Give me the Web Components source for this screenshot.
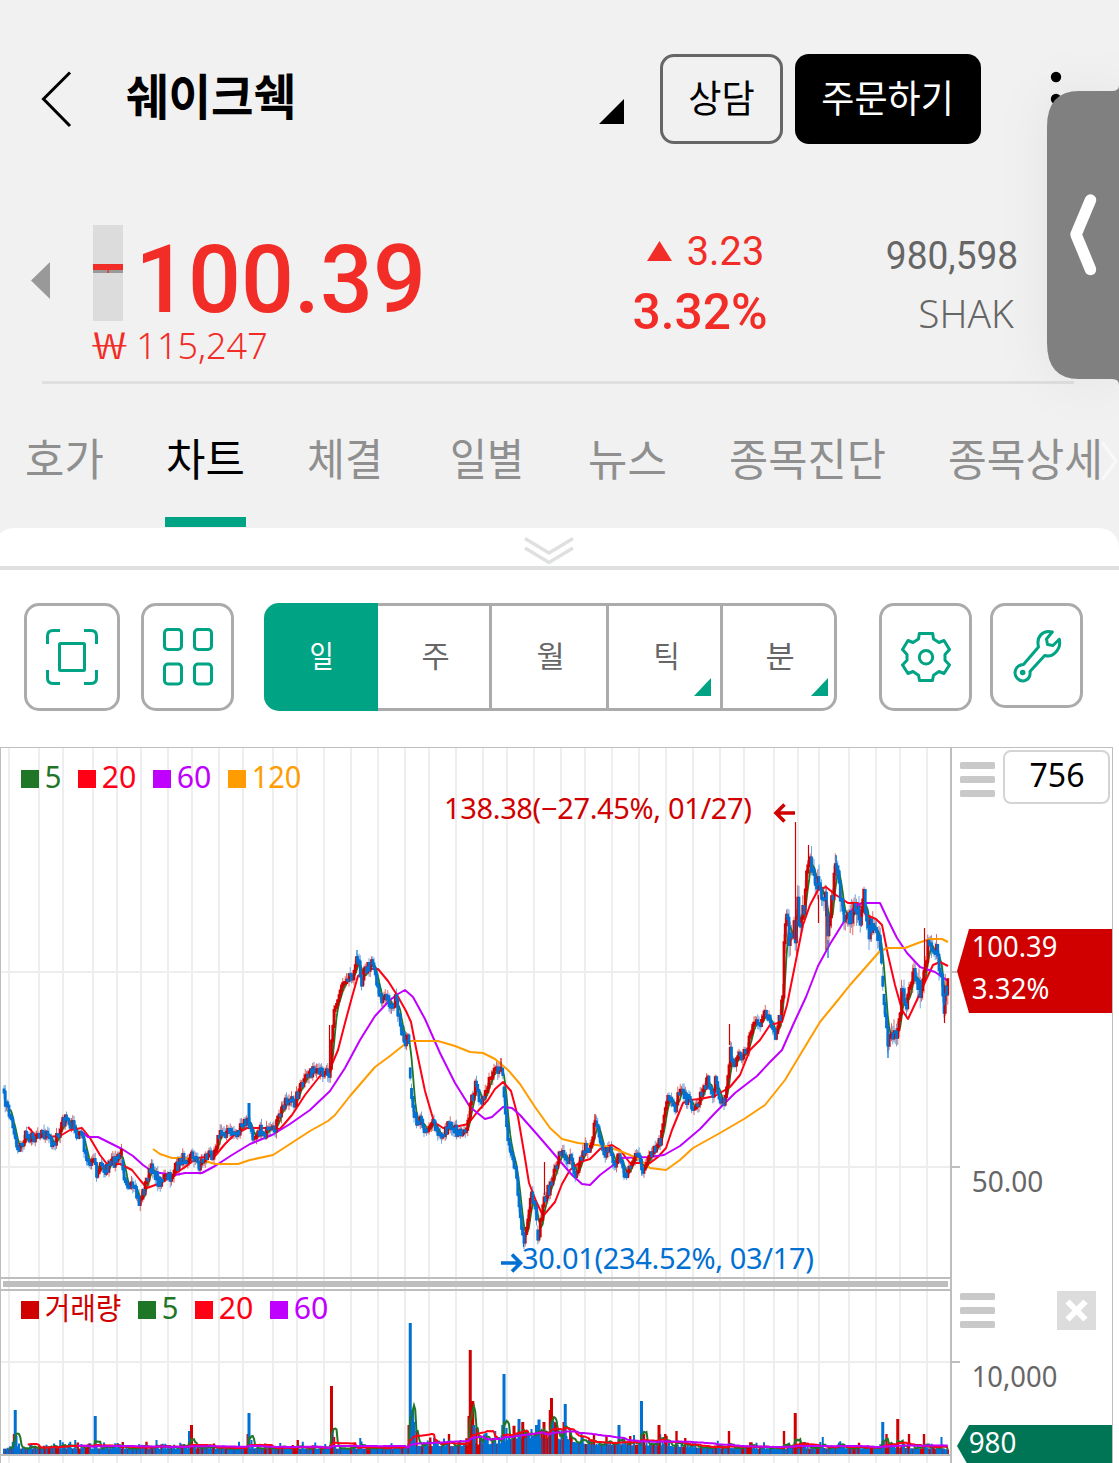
<!DOCTYPE html>
<html lang="ko">
<head>
<meta charset="utf-8">
<title>쉐이크쉑</title>
<style>
  body {
    margin: 0;
    width: 1119px;
    height: 1463px;
    overflow: hidden;
    position: relative;
    background: #fff;
    font-family: "Noto Sans", "Noto Sans CJK KR", sans-serif;
  }
</style>
</head>
<body>
<stock-header></stock-header>
<collapse-bar></collapse-bar>
<chart-toolbar></chart-toolbar>
<stock-chart></stock-chart>
<side-handle></side-handle>

<script>
const FONTS = {
  noto: '"Noto Sans", "Noto Sans CJK KR", sans-serif',
  roboto: 'Roboto, "Noto Sans", sans-serif',
  kr: '"Noto Sans CJK KR", "Noto Sans", sans-serif'
};
const BEARING = {noto: 0.045, roboto: 0.03, kr: 0.02};
const BASELINE = {noto: 0.86, roboto: 0.86, kr: 0.865};

// one line of text, stretched or squeezed to the width w, centred on its own box
class FitText extends HTMLElement {
  connectedCallback() {
    const w = +this.getAttribute('w');
    const size = +this.getAttribute('size');
    const weight = this.getAttribute('weight') || 400;
    const name = this.getAttribute('font') || 'noto';
    const pad = size * BEARING[name];
    this.attachShadow({mode: 'open'}).innerHTML = `
    <style>
      :host { display: block; flex: none; width: ${w}px; height: ${size}px; }
      svg { display: block; overflow: visible; }
      text { font: ${weight} ${size}px ${FONTS[name]}; fill: currentColor; }
    </style>
    <svg width="${w}" height="${size}">
      <text x="${-pad}" y="${size * BASELINE[name]}" textLength="${w + pad * 2}" lengthAdjust="spacingAndGlyphs">${this.textContent}</text>
    </svg>`;
  }
}
customElements.define('fit-text', FitText);

class TabItem extends HTMLElement {
  connectedCallback() {
    this.attachShadow({mode: 'open'}).innerHTML = `
    <style>
      :host {
        display: flex;
        flex-direction: column;
        align-items: center;
        justify-content: space-between;
        flex: none;
        height: 89px;
        color: #8f8f8f;
      }
      :host([active]) { color: #000; }
      i { width: 81px; height: 10px; margin: 0 -2px; }
      :host([active]) i { background: #00a383; }
    </style>
    <slot></slot>${this.hasAttribute('active') ? '<i></i>' : ''}`;
  }
}
customElements.define('tab-item', TabItem);

class StockHeader extends HTMLElement {
  constructor() {
    super();
    this.attachShadow({mode: 'open'}).innerHTML = `
    <style>
      :host { display: block; height: 528px; background: #f1f1f1; overflow: hidden; }
      svg { display: block; flex: none; }
      .bar { display: flex; align-items: center; height: 90px; padding: 54px 0 0 41px; }
      .title { margin: -3px 0 0 55px; }
      .more-name { margin: 25px 36px 0 304px; }
      .btn {
        box-sizing: border-box;
        display: flex;
        justify-content: center;
        align-items: center;
        height: 90px;
        padding-bottom: 2px;
        border-radius: 14px;
      }
      .ask { width: 123px; border: 3px solid #666; margin-right: 12px; }
      .order { width: 186px; background: #000; color: #fff; margin-right: 69px; }
      .order fit-text { margin-right: 2px; }
      .quote { display: flex; align-items: flex-start; height: 237px; padding-left: 31px; color: #f22d27; }
      .prev { margin: 118px 43px 0 0; }
      .price { width: 541px; padding-top: 81px; }
      .now { display: flex; gap: 15px; height: 96px; }
      .now fit-text { margin-top: 5px; }
      .won { display: flex; gap: 13px; margin: 6px 0 0 1px; }
      .diff { width: 132px; padding-top: 87px; }
      .diff div { display: flex; align-items: center; justify-content: flex-end; gap: 16px; margin-right: 3px; }
      .diff > fit-text { margin-top: 15px; }
      .code { width: 131px; margin-left: 121px; padding-top: 92px; color: #666; }
      .code fit-text + fit-text { margin: 20px 0 0 33px; }
      hr { width: 1032px; height: 3px; margin: 0 0 0 42px; border: 0; background: #dfdfdf; }
      nav { display: flex; margin-top: 54px; padding-left: 26px; }
    </style>
    <div class="bar">
      <svg width="31" height="58"><path d="M29 2.500 2.500 29 29 56" fill="none" stroke="#000" stroke-width="3"/></svg>
      <fit-text class="title" w="168" size="49" weight="700" font="kr">쉐이크쉑</fit-text>
      <svg class="more-name" width="25" height="25"><path d="M25 0V25H0z"/></svg>
      <div class="btn ask"><fit-text w="65" size="38" font="kr">상담</fit-text></div>
      <div class="btn order"><fit-text w="131" size="38" font="kr">주문하기</fit-text></div>
      <svg width="12" height="70"><g><circle cx="6" cy="13" r="5.200"/><circle cx="6" cy="35" r="5.200"/><circle cx="6" cy="57" r="5.200"/></g></svg>
    </div>
    <div class="quote">
      <svg class="prev" width="19" height="37"><path d="M19 0V37L0 18.500z" fill="#999"/></svg>
      <div class="price">
        <div class="now">
          <svg width="30" height="96"><path fill="#dcdcdc" d="M0 0h30v96H0z"/><path fill="#999" d="M0 45h30v3H0z"/><path fill="#f22d27" d="M0 39h30v6H0zM14.500 45h1.500v3h-1.500z"/></svg>
          <fit-text w="285" size="95" weight="500" font="roboto">100.39</fit-text>
        </div>
        <div class="won">
          <fit-text w="31" size="37" weight="300" font="kr">₩</fit-text>
          <fit-text w="128" size="37" weight="350">115,247</fit-text>
        </div>
      </div>
      <div class="diff">
        <div><svg width="25" height="20"><path d="M12.500 0 25 20H0z" fill="#f22d27"/></svg><fit-text w="75" size="40" font="roboto">3.23</fit-text></div>
        <fit-text w="132" size="50" weight="500" font="roboto">3.32%</fit-text>
      </div>
      <div class="code">
        <fit-text w="130" size="38" font="roboto">980,598</fit-text>
        <fit-text w="92" size="39" weight="350">SHAK</fit-text>
      </div>
    </div>
    <hr>
    <nav>
      <tab-item><fit-text w="77" size="44" font="kr">호가</fit-text></tab-item>
      <tab-item active style="margin-left:64px"><fit-text w="77" size="44" font="kr">차트</fit-text></tab-item>
      <tab-item style="margin-left:64px"><fit-text w="74" size="44" font="kr">체결</fit-text></tab-item>
      <tab-item style="margin-left:69px"><fit-text w="72" size="44" font="kr">일별</fit-text></tab-item>
      <tab-item style="margin-left:66px"><fit-text w="77" size="44" font="kr">뉴스</fit-text></tab-item>
      <tab-item style="margin-left:64px"><fit-text w="155" size="44" font="kr">종목진단</fit-text></tab-item>
      <tab-item style="margin-left:64px"><fit-text w="153" size="44" font="kr">종목상세</fit-text></tab-item>
      <svg width="17" height="44"><path d="M0 4 14 23 0 42" fill="none" stroke="#fff" stroke-opacity=".6" stroke-width="3"/></svg>
    </nav>`;
  }
}
customElements.define('stock-header', StockHeader);

class CollapseBar extends HTMLElement {
  constructor() {
    super();
    this.attachShadow({mode: 'open'}).innerHTML = `
    <style>
      :host { display: block; height: 42px; background: #f1f1f1; }
      div {
        box-sizing: border-box;
        height: 42px;
        margin-left: -6px;
        padding: 8px 0 0 530px;
        background: #fff;
        border-bottom: 4px solid #dfe1e0;
        border-radius: 20px 20px 0 0;
      }
      svg { display: block; }
    </style>
    <div><svg width="50" height="30" fill="none" stroke="#dfe1e0" stroke-width="3.500"><path d="M1 2.500 25 17 49 2.500M1 12 25 26.500 49 12"/></svg></div>`;
  }
}
customElements.define('collapse-bar', CollapseBar);

class ToolButton extends HTMLElement {
  constructor() {
    super();
    this.attachShadow({mode: 'open'}).innerHTML = `
    <style>
      :host {
        box-sizing: border-box;
        display: flex;
        align-items: center;
        justify-content: center;
        flex: none;
        width: 93px;
        height: 108px;
        border: 3px solid #ababab;
        border-radius: 15px;
        background: #fff;
      }
    </style>
    <slot></slot>`;
  }
}
customElements.define('tool-button', ToolButton);

class PeriodItem extends HTMLElement {
  constructor() {
    super();
    this.attachShadow({mode: 'open'}).innerHTML = `
    <style>
      :host {
        box-sizing: border-box;
        display: flex;
        align-items: center;
        justify-content: center;
        position: relative;
        height: 108px;
        padding: 0 0 2px 3px;
        border: solid #ababab;
        border-width: 3px 3px 3px 0;
        color: #666;
      }
      :host([active]) { background: #00a383; border-color: #00a383; color: #fff; border-radius: 15px 0 0 15px; }
      :host(:last-of-type) { border-radius: 0 15px 15px 0; }
      svg { display: none; position: absolute; right: 9px; bottom: 12px; }
      :host(:last-of-type) svg { right: 6px; }
      :host([more]) svg { display: block; }
    </style>
    <slot></slot>
    <svg width="17" height="18"><path d="M17 0v18H0z" fill="#00a383"/></svg>`;
  }
}
customElements.define('period-item', PeriodItem);

class ChartToolbar extends HTMLElement {
  constructor() {
    super();
    this.attachShadow({mode: 'open'}).innerHTML = `
    <style>
      :host { display: flex; align-items: flex-start; height: 144px; padding: 33px 0 0 24px; }
      svg { display: block; fill: none; stroke: #00a383; stroke-width: 3; }
      .periods { display: flex; margin: 0 42px 0 30px; }
    </style>
    <tool-button style="width:96px;margin-right:21px">
      <svg width="52" height="56"><path d="M1.500 15V7q0-5.500 5.500-5.500h7M38 1.500h7q5.500 0 5.500 5.500v8M50.500 41v8q0 5.500-5.500 5.500h-7M14 54.500H7q-5.500 0-5.500-5.500v-8"/><rect x="13.500" y="14.500" width="25" height="27" rx="1"/></svg>
    </tool-button>
    <tool-button>
      <svg width="50" height="58"><rect x="1.500" y="1.500" width="17" height="20" rx="3.500"/><rect x="31.500" y="1.500" width="17" height="20" rx="3.500"/><rect x="1.500" y="36" width="17" height="20" rx="3.500"/><rect x="31.500" y="36" width="17" height="20" rx="3.500"/></svg>
    </tool-button>
    <div class="periods">
      <period-item active style="width:114px"><fit-text w="23" size="30" font="kr">일</fit-text></period-item>
      <period-item style="width:114px"><fit-text w="27" size="30" font="kr">주</fit-text></period-item>
      <period-item style="width:117px"><fit-text w="27" size="30" font="kr">월</fit-text></period-item>
      <period-item more style="width:114px"><fit-text w="25" size="30" font="kr">틱</fit-text></period-item>
      <period-item more style="width:114px"><fit-text w="28" size="30" font="kr">분</fit-text></period-item>
    </div>
    <tool-button>
      <svg width="50" height="50" stroke-linejoin="round"><path d="M18.300 1.500H31.700L32.500 7 38 10.500 43 8.500 48.500 17.500 44 22.500V28.300L48.500 33 43 41.500 38 39.500 32.500 43.200 31.500 48.500H18.500L17.500 43.200 12 39.500 7 41.500 1.500 33 6 28.300V22.500L1.500 17.500 7 8.500 12 10.500 17.500 7z"/><circle cx="25" cy="25.300" r="6.700"/></svg>
    </tool-button>
    <tool-button style="height:105px;margin-left:18px">
      <svg width="46" height="51" overflow="visible" stroke-linejoin="round"><path d="M38.300 2C29 -.5 22 6.500 24.500 17L9.500 34.500C1 35 -.8 43.500 3 48 8.500 54 17 50 16 41.500L30.700 25.500C39 28 47.500 19 45.300 9.300L39 15.500 33.500 14.500 32.500 9z"/><circle cx="8.700" cy="42.500" r="1.300"/></svg>
    </tool-button>`;
  }
}
customElements.define('chart-toolbar', ChartToolbar);

class ChartLegend extends HTMLElement {
  connectedCallback() {
    const items = this.getAttribute('items').split(' ').map(item => item.split(':'));
    this.attachShadow({mode: 'open'}).innerHTML = `
    <style>
      :host { display: flex; gap: 18px; position: absolute; left: 21px; }
      span { display: flex; align-items: center; gap: 7px; }
      i { width: 18px; height: 18px; margin-top: 4px; }
    </style>
    ${items.map(([name, color, w]) => `<span style="color:${color}"><i style="background:${color}"></i><fit-text w="${w}" size="30">${name}</fit-text></span>`).join('')}`;
  }
}
customElements.define('chart-legend', ChartLegend);

// [x, y] of the price
const PRICE = [[4,1097],[8,1110],[13,1125],[17,1147],[21,1147],[26,1135],[32,1138],[40,1132],[47,1136],[53,1143],[59,1136],[62,1122],[66,1120],[73,1125],[77,1140],[81,1130],[85,1152],[90,1165],[94,1155],[97,1178],[100,1165],[106,1170],[113,1162],[119,1158],[121,1150],[124,1175],[129,1185],[135,1192],[139,1202],[144,1190],[148,1175],[153,1168],[158,1182],[164,1178],[170,1178],[176,1168],[181,1160],[188,1157],[193,1155],[199,1165],[205,1157],[213,1153],[219,1136],[224,1132],[231,1133],[238,1133],[245,1122],[249,1122],[252,1137],[258,1130],[265,1133],[273,1132],[279,1118],[285,1100],[294,1103],[299,1090],[304,1083],[310,1070],[317,1075],[325,1070],[330,1072],[331,1045],[334,1012],[338,1000],[341,985],[347,976],[353,974],[355,972],[357,955],[359,960],[361,982],[364,972],[369,966],[372,958],[376,978],[381,1000],[387,998],[392,1007],[396,998],[399,1020],[401,1034],[405,1041],[409,1038],[411,1097],[413,1112],[416,1121],[421,1121],[426,1131],[431,1122],[435,1128],[440,1138],[445,1131],[450,1124],[456,1131],[462,1131],[468,1124],[471,1102],[475,1086],[479,1096],[484,1101],[489,1082],[494,1074],[498,1071],[501,1064],[503,1076],[505,1112],[508,1137],[512,1154],[515,1169],[518,1194],[521,1225],[524,1242],[527,1231],[531,1194],[535,1210],[538,1238],[541,1220],[544,1199],[549,1189],[553,1179],[557,1163],[561,1148],[566,1163],[570,1153],[575,1174],[580,1161],[585,1148],[590,1148],[595,1124],[600,1138],[605,1153],[610,1148],[615,1168],[619,1153],[624,1175],[629,1169],[634,1158],[640,1158],[643,1172],[650,1158],[655,1150],[660,1142],[664,1120],[667,1100],[671,1097],[675,1108],[681,1085],[686,1098],[692,1105],[697,1108],[702,1090],[707,1080],[713,1095],[716,1078],[720,1100],[724,1103],[728,1080],[730,1045],[733,1065],[738,1055],[742,1060],[748,1045],[753,1025],[760,1025],[765,1010],[771,1020],[776,1040],[780,1015],[783,1000],[784,940],[787,915],[789,940],[794,930],[796,940],[797,880],[800,935],[804,905],[807,870],[810,852],[813,880],[818,885],[822,895],[826,900],[828,930],[830,915],[833,890],[836,860],[840,890],[845,925],[850,915],[855,910],[860,920],[864,898],[868,935],[873,920],[877,930],[881,950],[883,1000],[886,1030],[888,1047],[892,1035],[896,1037],[900,1010],[902,990],[906,1010],[910,980],[915,970],[920,990],[925,965],[928,945],[932,945],[937,955],[940,970],[944,1005],[948,975]];

const MA = {
  '#ff0015': '28,1127 35,1135 45,1137 60,1136 70,1130 82,1128 90,1138 100,1155 107,1164 120,1164 132,1170 140,1180 147,1188 158,1184 172,1176 185,1167 197,1158 215,1156 225,1144 235,1134 247,1128 265,1128 280,1129 292,1115 305,1095 320,1076 330,1069 338,1050 345,1023 352,997 358,976 367,969 378,969 388,981 397,995 406,1011 411,1022 416,1048 425,1091 434,1122 443,1128 455,1127 468,1124 478,1111 488,1100 495,1089 503,1082 511,1091 518,1117 524,1152 529,1183 536,1201 543,1216 555,1202 562,1184 570,1170 580,1162 590,1159 600,1149 612,1145 620,1150 630,1163 642,1163 650,1163 658,1157 666,1148 672,1130 683,1103 690,1100 700,1099 715,1096 730,1087 740,1075 750,1050 760,1040 770,1025 782,1022 787,1005 795,965 803,925 810,905 818,890 826,887 836,895 848,903 858,903 866,915 876,919 882,925 888,955 895,985 902,1010 908,1019 916,1002 925,982 933,965 940,962 948,966',
  '#c000ff': '82,1132 88,1137 98,1137 110,1143 122,1149 133,1156 143,1165 153,1172 175,1175 185,1173 202,1173 215,1166 232,1155 250,1144 272,1135 290,1124 310,1110 330,1091 345,1068 360,1040 375,1016 390,1000 398,994 405,990 413,997 425,1019 440,1053 455,1083 470,1107 485,1119 492,1117 503,1107 512,1108 520,1115 535,1132 548,1147 560,1161 572,1175 582,1184 590,1185 600,1175 612,1166 620,1158 650,1157 664,1155 680,1146 700,1129 715,1113 735,1093 757,1076 770,1062 782,1050 793,1025 806,997 818,966 830,944 845,920 855,906 862,903 880,903 888,920 897,938 907,953 920,967 935,972 948,981',
  '#ff9c00': '153,1149 160,1154 172,1158 185,1158 205,1161 215,1164 238,1164 250,1160 273,1155 290,1144 310,1131 328,1121 335,1115 350,1096 375,1067 390,1056 405,1044 410,1041 438,1041 455,1046 470,1052 483,1053 495,1059 508,1070 520,1084 535,1107 550,1128 562,1139 578,1143 605,1146 620,1151 630,1155 640,1160 650,1168 666,1170 680,1160 693,1148 720,1133 744,1119 765,1105 785,1080 800,1055 820,1022 838,1000 850,985 865,968 880,951 888,948 905,948 918,943 930,939 942,939 948,942'
};

// single long wicks: x, top, bottom, colour
const WICKS = [[329.5,1025,1070,0],[249,1103,1128,1],[795.5,822,940,0],[729.5,1024,1045,0],[924.500,928,970,0],[808.500,845,870,0],[544.500,1162,1195,0],[523.500,1235,1247,1],[944.500,1005,1023,0],[888,1040,1058,1],[826,900,950,0],[818.500,895,923,0],[828,940,958,1],[595,1114,1125,0],[501,1058,1072,0],[836,855,880,1],[357,950,965,1]];

// volume peaks: x, top, colour
const PEAKS = [[14,1434,0],[15.500,1410,1],[17,1436,1],[60,1440,1],[75,1440,1],[95.500,1416,1],[157,1440,1],[189.500,1431,1],[191,1425,0],[249.500,1413,1],[248,1434,0],[251,1440,1],[298,1440,0],[331,1386,0],[332.500,1428,1],[334,1437,0],[360,1438,1],[409,1425,0],[410.500,1323,1],[412.500,1410,1],[414,1422,1],[416,1431,0],[449,1434,0],[469,1416,0],[470.500,1350,0],[472.500,1401,0],[474,1425,1],[476,1428,0],[503,1425,1],[504.500,1374,1],[506,1428,1],[519,1419,1],[523,1422,0],[544,1422,0],[550,1410,0],[552,1398,0],[554,1422,0],[564,1422,0],[565.500,1404,1],[619.500,1425,1],[641.500,1401,1],[644,1434,0],[659.500,1425,0],[665,1434,0],[677,1431,0],[729.500,1431,0],[784.500,1431,0],[795.500,1413,0],[822.500,1437,1],[883,1422,1],[886,1434,0],[898,1419,0],[909,1434,0],[924.500,1434,0],[942,1437,1]];
const LEVELS = [[0,8],[400,8],[420,12],[460,12],[500,16],[515,24],[555,24],[575,18],[590,14],[660,13],[700,9],[760,8],[900,9],[950,7]];

const GRID = [9,39,63,93,117,141,168,192,219,243,273,297,324,351,378,405,429,456,483,507,534,561,585,612,639,666,693,720,744,774,798,819,849,876,900,927];
const RED = '#d00000';
const BLUE = '#0070d2';

let seed = 7;
const rand = () => {
  seed = (seed * 16807) % 2147483647;
  return seed / 2147483647;
};

const at = (points, x) => {
  const i = Math.max(1, points.findIndex(p => p[0] >= x));
  const [x0, y0] = points[i - 1];
  const [x1, y1] = points[i];
  return y0 + (y1 - y0) * (x - x0) / (x1 - x0);
};

const average = (values, n) => values.map((v, i) => {
  const part = values.slice(Math.max(0, i - n + 1), i + 1);
  return part.reduce((a, b) => a + b, 0) / part.length;
});

class StockChart extends HTMLElement {
  constructor() {
    super();
    this.xs = Array.from({length: 756}, (_, i) => 4 + i * 1.25);
    this.attachShadow({mode: 'open'});
    this.render();
  }

  candles() {
    // the swings are wider in the volatile right part
    const closes = this.xs.map(x => at(PRICE, Math.min(x, 948)) + (rand() - 0.5) * (x > 780 ? 17 : 10));
    const path = ['', ''];
    const wick = ['', ''];
    closes.forEach((close, i) => {
      const open = i ? closes[i - 1] : close - 2;
      const x = this.xs[i];
      // only falls leave an open gap
      const gap = close - open > 18 && (x < 600 || x > 880 && x < 885);
      const from = gap ? close - 8 : open;
      const down = close > from ? 1 : 0;
      const top = Math.min(from, close) - 1.5;
      const bottom = Math.max(from, close) + 1.5;
      const reach = x > 780 ? 12 : 6;
      path[down] += `M${x} ${top.toFixed(1)}V${bottom.toFixed(1)}`;
      wick[down] += `M${x} ${(top - rand() * reach).toFixed(1)}V${(bottom + rand() * reach).toFixed(1)}`;
    });
    const ma5 = average(closes, 5).map((y, i) => `${this.xs[i]},${y.toFixed(1)}`).slice(5).join(' ');
    return `
      <path d="${wick[0]}" stroke="${RED}" stroke-opacity=".6"/>
      <path d="${wick[1]}" stroke="${BLUE}" stroke-opacity=".6"/>
      <polyline points="${ma5}" stroke="#1f7627" stroke-width="1.800"/>
      ${Object.entries(MA).map(([color, points]) => `<polyline points="${points}" stroke="${color}" stroke-width="2" stroke-linejoin="round"/>`).join('')}
      <path d="${path[0]}" stroke="${RED}" stroke-width="2.800"/>
      <path d="${path[1]}" stroke="${BLUE}" stroke-width="2.800"/>
      ${WICKS.map(([x, y0, y1, c]) => `<path d="M${x} ${y0}V${y1}" stroke="${c ? BLUE : RED}" stroke-width="${x === 249 ? 3 : 1.2}"/>`).join('')}`;
  }

  volumes() {
    const heights = this.xs.map(x => at(LEVELS, x) * (0.65 + rand() ** 4 * 0.9));
    const colors = this.xs.map(() => rand() > 0.35 ? 1 : 0);
    PEAKS.forEach(([x, top, color]) => {
      const i = Math.round((x - 4) / 1.25);
      heights[i] = 1454 - top;
      colors[i] = color;
    });
    const path = ['', ''];
    const tall = ['', ''];
    heights.forEach((h, i) => {
      (h > 26 ? tall : path)[colors[i]] += `M${this.xs[i]} 1454v${-h.toFixed(1)}`;
    });
    const line = (n, color) => {
      const points = average(heights, n).map((h, i) => `${this.xs[i]},${(1454 - h).toFixed(1)}`).slice(n - 1).join(' ');
      return `<polyline points="${points}" stroke="${color}" stroke-width="2"/>`;
    };
    return `
      <path d="${path[0]}" stroke="${RED}" stroke-width="2.400"/>
      <path d="${path[1]}" stroke="${BLUE}" stroke-width="2"/>
      <path d="${tall[0]}" stroke="${RED}" stroke-width="3"/>
      <path d="${tall[1]}" stroke="${BLUE}" stroke-width="3"/>
      ${line(5, '#1f7627')}${line(20, '#ff0015')}${line(60, '#c000ff')}`;
  }

  render() {
    const menu = '<svg width="35" height="35"><path d="M1.500 0h32q1.500 0 1.500 1.500v4q0 1.500-1.500 1.500h-32Q0 7 0 5.500v-4Q0 0 1.500 0zm0 14h32q1.500 0 1.500 1.500v4q0 1.500-1.500 1.500h-32Q0 21 0 19.500v-4Q0 14 1.500 14zm0 14h32q1.500 0 1.500 1.500v4q0 1.500-1.500 1.500h-32Q0 35 0 33.500v-4Q0 28 1.500 28z" fill="#c9c9c9"/></svg>';
    this.shadowRoot.innerHTML = `
    <style>
      :host { display: flex; position: relative; width: 1113px; height: 716px; }
      svg { display: block; flex: none; }
      text { font: 29px "Noto Sans", sans-serif; }
      .plot { fill: none; overflow: visible; }
      .axis {
        box-sizing: border-box;
        width: 161px;
        height: 717px;
        border: solid #bebebe;
        border-width: 1px 1px 0 0;
        display: flex;
        flex-direction: column;
      }
      .row { display: flex; align-items: center; padding-left: 8px; }
      .row .menu { margin-top: 5px; }
      .count {
        box-sizing: border-box;
        display: flex;
        justify-content: center;
        align-items: center;
        width: 107px;
        height: 54px;
        margin-left: 8px;
        padding-bottom: 3px;
        border: 2px solid #d4d4d4;
        border-radius: 8px;
      }
      .flag { box-sizing: border-box; width: 155px; margin-left: 5px; color: #fff; flex: none; }
      .last {
        height: 84px;
        margin-top: 125px;
        padding: 3px 0 0 16px;
        background: ${RED};
        clip-path: polygon(12px 0, 100% 0, 100% 100%, 12px 100%, 0 50%);
      }
      .last fit-text + fit-text { margin: 13px 0 0 0; }
      .vol {
        height: 42px;
        margin-top: 34px;
        padding: 3px 0 0 13px;
        background: #007556;
        clip-path: polygon(12px 0, 100% 0, 100% 100%, 12px 100%, 0 50%);
      }
      .value { color: #666; margin-left: 21px; }
    </style>
    <svg class="plot" width="952" height="716" viewBox="0 747 952 716">
      <path d="${GRID.map(x => `M${x} 748V1463`).join('')}M0 972H950M0 1167H950M0 1362H950" stroke="#eee" stroke-width="2"/>
      <path d="M952 972H960M952 1167H960M952 1362H960" stroke="#bebebe" stroke-width="2"/>
      ${this.candles()}
      <path d="M0 1278H951M0 1290H951M0 1455H951M951 747V1463" stroke="#bebebe" stroke-width="2"/>
      <path d="M0 747.500H952M.5 747V1463" stroke="#bebebe"/>
      <path d="M3 1284H948" stroke="#bebebe" stroke-width="6"/>
      ${this.volumes()}
      <text x="444" y="819" textLength="308" fill="${RED}">138.38(−27.45%, 01/27)</text>
      <path d="M795 813H777M784.500 804.500 776 813 784.500 821.500" stroke="${RED}" stroke-width="3.600"/>
      <text x="522" y="1269" textLength="292" fill="${BLUE}">30.01(234.52%, 03/17)</text>
      <path d="M501 1263H520M512 1254.500 520.500 1263 512 1271.500" stroke="${BLUE}" stroke-width="3.600"/>
    </svg>
    <div class="axis">
      <div class="row" style="margin-top:2px"><div class="menu">${menu}</div><div class="count"><fit-text w="52" size="33">756</fit-text></div></div>
      <div class="flag last">
        <fit-text w="83" size="29">100.39</fit-text>
        <fit-text w="75" size="29">3.32%</fit-text>
      </div>
      <div class="value" style="margin-top:154px"><fit-text w="69" size="29">50.00</fit-text></div>
      <div class="row" style="margin-top:95px">${menu}
        <svg style="margin-left:62px" width="39" height="39"><path fill="#dcdcdc" d="M0 0h39v39H0z"/><path d="M10.500 10.500l18 18m0-18l-18 18" stroke="#fff" stroke-width="6"/></svg>
      </div>
      <div class="value" style="margin-top:32px"><fit-text w="83" size="29">10,000</fit-text></div>
      <div class="flag vol"><fit-text w="45" size="29">980</fit-text></div>
    </div>
    <chart-legend style="top:15px" items="5:#1f7627:14 20:#ff0015:32 60:#c000ff:32 120:#ff9c00:47"></chart-legend>
    <chart-legend style="top:546px" items="거래량:${RED}:74 5:#1f7627:14 20:#ff0015:32 60:#c000ff:32"></chart-legend>`;
  }
}
customElements.define('stock-chart', StockChart);

class SideHandle extends HTMLElement {
  constructor() {
    super();
    this.attachShadow({mode: 'open'}).innerHTML = `
    <style>
      :host { display: block; position: absolute; left: 1047px; top: 85px; }
      svg { display: block; overflow: visible; filter: drop-shadow(0 0 26px rgba(0, 0, 0, .06)); }
    </style>
    <svg width="72" height="300">
      <path fill="#808080" d="M72 0Q72 6 65 6H32Q0 6 0 42V258Q0 294 32 294H65Q72 294 72 300z"/>
      <path d="M43.500 115 29 149.500 43.500 184.500" fill="none" stroke="#fff" stroke-width="11.500" stroke-linecap="round" stroke-linejoin="round"/>
    </svg>`;
  }
}
customElements.define('side-handle', SideHandle);
</script>
</body>
</html>
